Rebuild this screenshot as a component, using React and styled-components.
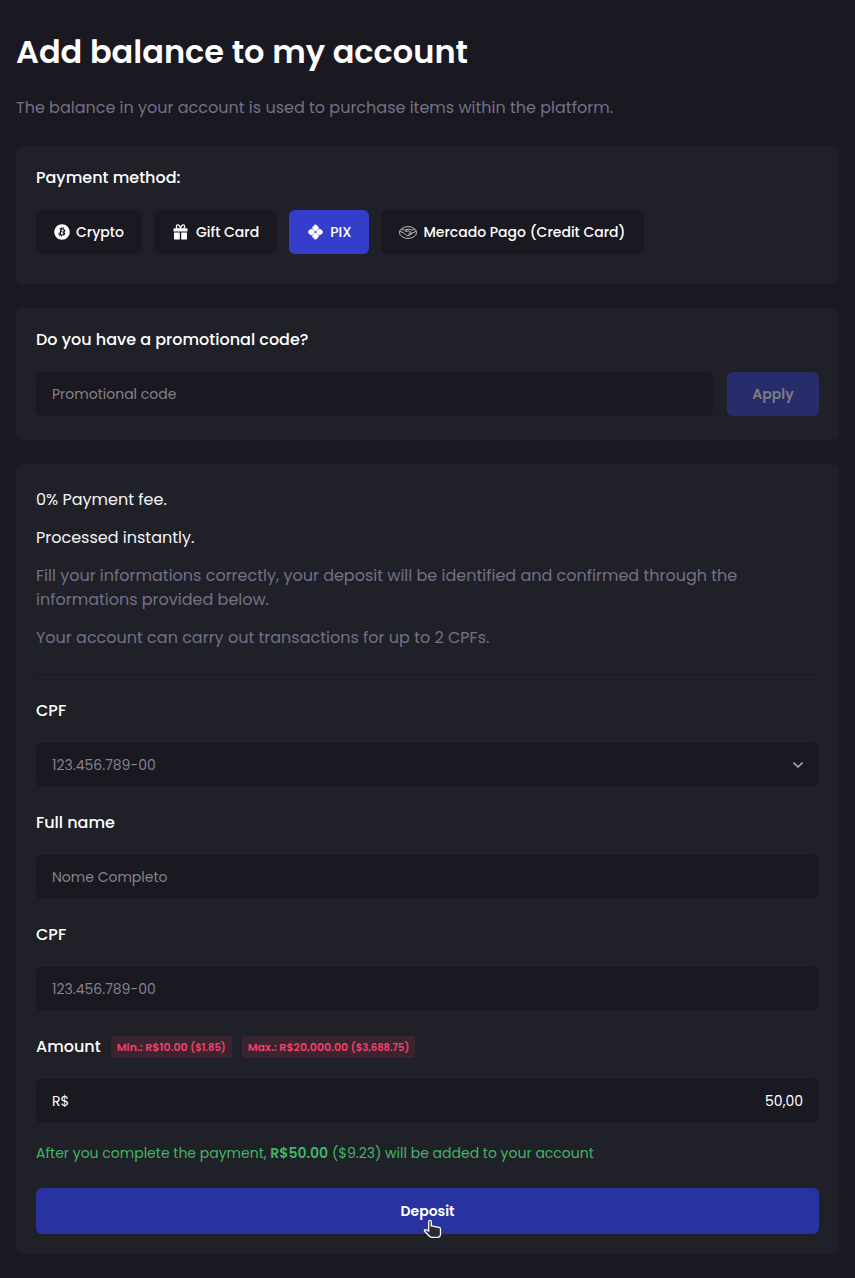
import React from 'react';
import styled, { createGlobalStyle, css } from 'styled-components';
import { FaBitcoin } from 'react-icons/fa';

const GlobalStyle = createGlobalStyle`
  *, *::before, *::after { box-sizing: border-box; }
  body {
    margin: 0;
    background: #1a1820;
    color: #fff;
    font-family: Poppins, Inter, sans-serif;
    font-size: 16px;
    line-height: 24px;
  }
  h1, h2, p { margin: 0; }
  button, input { font-family: inherit; }
`;

const Page = styled.main`
  position: relative;
  min-height: 1278px;
  padding: 28px 16px 24px;
`;

const Title = styled.h1`
  font-size: 32px;
  line-height: 48px;
  font-weight: 600;
`;

const Subtitle = styled.p`
  margin-top: 20px;
  color: #747087;
`;

const Card = styled.section`
  margin-top: ${(p) => p.$gap || 24}px;
  padding: 20px 20px ${(p) => p.$bottom}px;
  border-radius: 6px;
  background: #202028;
`;

const Heading = styled.h2`
  font-size: 16px;
  line-height: 24px;
  font-weight: 500;
`;

const Methods = styled.div`
  display: flex;
  gap: 12px;
  margin-top: 20px;
`;

const Method = styled.button`
  display: flex;
  align-items: center;
  gap: ${(p) => p.$gap || 6}px;
  height: 44px;
  padding: 0 18px;
  border: 0;
  border-radius: 6px;
  background: ${(p) => (p.$active ? '#333fcb' : '#1a1820')};
  color: #fff;
  font-size: 14px;
  font-weight: 500;
  white-space: nowrap;

  svg { flex: none; }
`;

const PromoRow = styled.div`
  display: flex;
  gap: 14px;
  margin-top: 20px;
`;

const fieldBox = css`
  width: 100%;
  height: 44px;
  border: 0;
  border-radius: 6px;
  background: #1a1820;
  color: #fff;
  font-size: 14px;
`;

const Input = styled.input`
  ${fieldBox}
  flex: 1;
  min-width: 0;
  padding: 0 16px;
  outline: none;

  &::placeholder { color: #85838b; opacity: 1; }
`;

const FieldShell = styled.div`
  ${fieldBox}
  display: flex;
  align-items: center;
  justify-content: space-between;
  padding: 0 16px;
  color: ${(p) => (p.$muted ? '#85838b' : '#fff')};
`;

const ApplyButton = styled.button`
  width: 92px;
  height: 44px;
  border: 0;
  border-radius: 6px;
  background: #272c6b;
  color: #7c7c83;
  font-size: 14px;
  font-weight: 600;
`;

const Notes = styled.div`
  display: flex;
  flex-direction: column;
  gap: 14px;
  padding: 4px 0 24px;
  border-bottom: 1px solid #1a1820;
`;

const Note = styled.p`
  color: ${(p) => (p.$muted ? '#747087' : '#f3f3f5')};
`;

const Field = styled.div`
  margin-top: 24px;
`;

const Label = styled.div`
  display: flex;
  align-items: center;
  height: 24px;
  margin-bottom: 20px;
  font-weight: 500;
`;

const Limit = styled.span`
  height: 22px;
  margin-left: 10px;
  padding: 0 6px;
  border-radius: 4px;
  background: #3a242f;
  color: #f1416c;
  font-size: 11px;
  line-height: 22px;
  font-weight: 600;

  small { font-size: 10px; }
`;

const Summary = styled.p`
  margin-top: 19px;
  color: #42b566;
  font-size: 14px;
  line-height: 22px;

  b { font-weight: 600; }
`;

const DepositButton = styled.button`
  display: block;
  width: 100%;
  height: 46px;
  margin-top: 24px;
  border: 0;
  border-radius: 6px;
  background: #2832a0;
  color: #fff;
  font-size: 14px;
  font-weight: 600;
`;

const Pointer = styled.svg`
  position: absolute;
  left: 423px;
  top: 1219px;
`;

function GiftIcon() {
  return (
    <svg width="17" height="16" viewBox="0 0 17 16" fill="#fff">
      <path d="M8.5 4.6C7.9 2 6.9.9 5.8.9c-.9 0-1.5.7-1.5 1.6 0 .8.4 1.6 1.2 2.1M8.5 4.6C9.1 2 10.1.9 11.2.9c.9 0 1.5.7 1.5 1.6 0 .8-.4 1.6-1.2 2.1" fill="none" stroke="#fff" strokeWidth="1.2" />
      <path d="M2.4 4.2h12.2c.5 0 .9.4.9.9v2.4h-14V5.1c0-.5.4-.9.9-.9zM2 8.6h5.8v6.9H3c-.6 0-1-.4-1-1zM9.2 8.6H15v5.9c0 .6-.4 1-1 1H9.2z" />
    </svg>
  );
}

function PixIcon() {
  return (
    <svg width="17" height="16" viewBox="0 0 17 16" fill="#fff">
      <g transform="translate(8.5 8) rotate(45)">
        <rect x="-5.7" y="-5.7" width="5.55" height="5.55" rx="1.6" />
        <rect x=".15" y="-5.7" width="5.55" height="5.55" rx="1.6" />
        <rect x="-5.7" y=".15" width="5.55" height="5.55" rx="1.6" />
        <rect x=".15" y=".15" width="5.55" height="5.55" rx="1.6" />
      </g>
    </svg>
  );
}

function HandshakeIcon() {
  return (
    <svg width="18" height="13" viewBox="0 0 18 13" fill="none" stroke="#e6e6ea" strokeWidth=".8">
      <ellipse cx="9" cy="6.5" rx="8.5" ry="5.9" />
      <path d="M2.2 3.2c2.2 1.1 4 .9 5.9.2.9-.4 1.7-.3 2.6.1 1.7.7 3.3.7 5.2-.3" />
      <path d="M.8 5.4 4 6.5c.7.3.8 1 1.5 1.2.6.1.8.6 1.3 1 .5.3.8.8 1.5.9.8.2 1.2.2 1.8-.3.8 0 1.2-.4 1.4-.9.8 0 1.3-.4 1.3-1.2l4.3-1.8" />
      <path d="M8.2 3.5 6.4 5.3c.9.6 2 .2 2.7-.6.8.1 2.5 1.6 3.7 2.5M9.2 7.8l1.6 1.1M10.1 6.6l1.8 1.4" />
    </svg>
  );
}

function Chevron() {
  return (
    <svg width="10" height="6" viewBox="0 0 10 6" fill="none" stroke="#aaa8ae" strokeWidth="1.6">
      <path d="m.5.6 4.5 4.4L9.5.6" />
    </svg>
  );
}

function HandCursor() {
  return (
    <Pointer width="19" height="20" viewBox="0 0 19 20">
      <path
        d="M7 1.3c-.9 0-1.3.6-1.3 1.4v9.5L3.3 10.8c-1-.5-2.3.2-1.8 1.2l4.4 4.7c.9 1.1 1.8 1.6 3.1 1.6h5.2c2 0 3.3-1.2 3.3-3.3V10c0-1-.5-1.5-1.5-1.7L8.3 6.9V2.7c0-.8-.4-1.4-1.3-1.4z"
        fill="#2d2b31" stroke="#fff" strokeWidth="1.3" strokeLinejoin="round"
      />
    </Pointer>
  );
}

export default function App() {
  return (
    <>
      <GlobalStyle />
      <Page>
        <Title>Add balance to my account</Title>
        <Subtitle>The balance in your account is used to purchase items within the platform.</Subtitle>

        <Card $gap={26} $bottom={30}>
          <Heading>Payment method:</Heading>
          <Methods>
            <Method><FaBitcoin size={16} />Crypto</Method>
            <Method $gap={7}><GiftIcon />Gift Card</Method>
            <Method $active><PixIcon />PIX</Method>
            <Method><HandshakeIcon />Mercado Pago (Credit Card)</Method>
          </Methods>
        </Card>

        <Card $bottom={24}>
          <Heading>Do you have a promotional code?</Heading>
          <PromoRow>
            <Input placeholder="Promotional code" />
            <ApplyButton disabled>Apply</ApplyButton>
          </PromoRow>
        </Card>

        <Card $bottom={20}>
          <Notes>
            <Note>0% Payment fee.</Note>
            <Note>Processed instantly.</Note>
            <Note $muted>
              Fill your informations correctly, your deposit will be identified and confirmed through the informations provided below.
            </Note>
            <Note $muted>Your account can carry out transactions for up to 2 CPFs.</Note>
          </Notes>
          <Field>
            <Label>CPF</Label>
            <FieldShell $muted><span>123.456.789-00</span><Chevron /></FieldShell>
          </Field>
          <Field>
            <Label>Full name</Label>
            <Input placeholder="Nome Completo" />
          </Field>
          <Field>
            <Label>CPF</Label>
            <Input placeholder="123.456.789-00" />
          </Field>
          <Field>
            <Label>
              Amount
              <Limit>Min.: R$10.00 <small>($1.85)</small></Limit>
              <Limit>Max.: R$20,000.00 <small>($3,688.75)</small></Limit>
            </Label>
            <FieldShell><span>R$</span><span>50,00</span></FieldShell>
          </Field>
          <Summary>
            After you complete the payment, <b>R$50.00</b> ($9.23) will be added to your account
          </Summary>
          <DepositButton>Deposit</DepositButton>
        </Card>
        <HandCursor />
      </Page>
    </>
  );
}
